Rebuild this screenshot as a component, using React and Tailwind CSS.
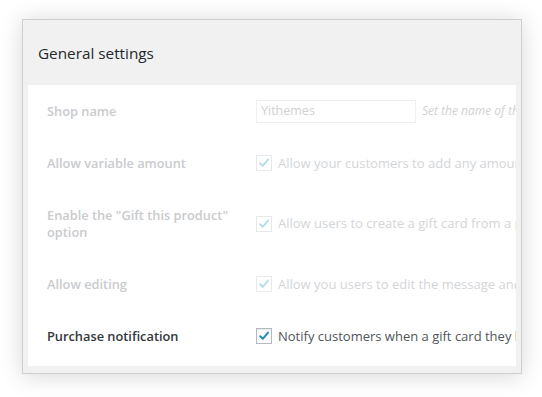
import React from "react";

const font = { fontFamily: '"Open Sans", "Noto Sans", sans-serif' };

function Check({ disabled }) {
  return (
    <span
      className={
        "flex h-[16px] w-[16px] shrink-0 items-center justify-center border bg-white " +
        (disabled ? "border-[#e6e8ea]" : "border-[#b4b9be] shadow-[inset_0_1px_2px_rgba(0,0,0,0.1)]")
      }
    >
      <svg width="12" height="12" viewBox="0 0 12 12">
        <path
          d="M2.2 6.2 L4.8 8.8 L10 2.6"
          fill="none"
          stroke={disabled ? "#b9dcec" : "#1e8cbe"}
          strokeWidth="2"
          strokeLinecap="round"
          strokeLinejoin="round"
        />
      </svg>
    </span>
  );
}

function Row({ label, children, disabled, two }) {
  return (
    <div className={"flex items-center pl-[19px] " + (two ? "h-[69px]" : "h-[52px]")}>
      <div
        className={
          "w-[209px] shrink-0 text-[12.8px] font-semibold leading-[17px] " +
          (disabled ? "text-[#c9cbcd]" : "text-[#32373c]")
        }
      >
        {label}
      </div>
      <div className="flex min-w-0 flex-1 items-center overflow-hidden whitespace-nowrap">{children}</div>
    </div>
  );
}

function CheckText({ text, disabled }) {
  return (
    <div className="flex items-center gap-[6px]">
      <Check disabled={disabled} />
      <span className={"text-[13px] leading-[17px] " + (disabled ? "text-[#d3d5d7]" : "text-[#50565b]")}>
        {text}
      </span>
    </div>
  );
}

export default function App() {
  return (
    <div className="h-[397px] w-[542px] overflow-hidden bg-white pl-[22px] pt-[19px]" style={font}>
      <div className="flex h-[355px] w-[500px] flex-col border border-[#cfcfcf] bg-[#f1f1f1] shadow-[0_2px_22px_rgba(0,0,0,0.16)]">
        <div className="flex h-[65px] items-center pl-[15px] pt-[1px]">
          <h2 className="text-[15.3px] font-normal text-[#23282d]">General settings</h2>
        </div>
        <div className="mx-[5px] h-[281px] overflow-hidden bg-white">
          <Row label="Shop name" disabled>
            <div className="flex h-[23px] w-[160px] shrink-0 items-center border border-[#f0f0f0] px-[4px] text-[12.5px] text-[#cfd1d3]">
              Yithemes
            </div>
            <span className="ml-[6px] text-[12px] italic text-[#cfd1d3]">Set the name of the shop</span>
          </Row>
          <Row label="Allow variable amount" disabled>
            <CheckText disabled text="Allow your customers to add any amount" />
          </Row>
          <Row label={'Enable the "Gift this product" option'} disabled two>
            <CheckText disabled text="Allow users to create a gift card from a product" />
          </Row>
          <Row label="Allow editing" disabled>
            <CheckText disabled text="Allow you users to edit the message and" />
          </Row>
          <Row label="Purchase notification">
            <CheckText text="Notify customers when a gift card they have" />
          </Row>
        </div>
      </div>
    </div>
  );
}
